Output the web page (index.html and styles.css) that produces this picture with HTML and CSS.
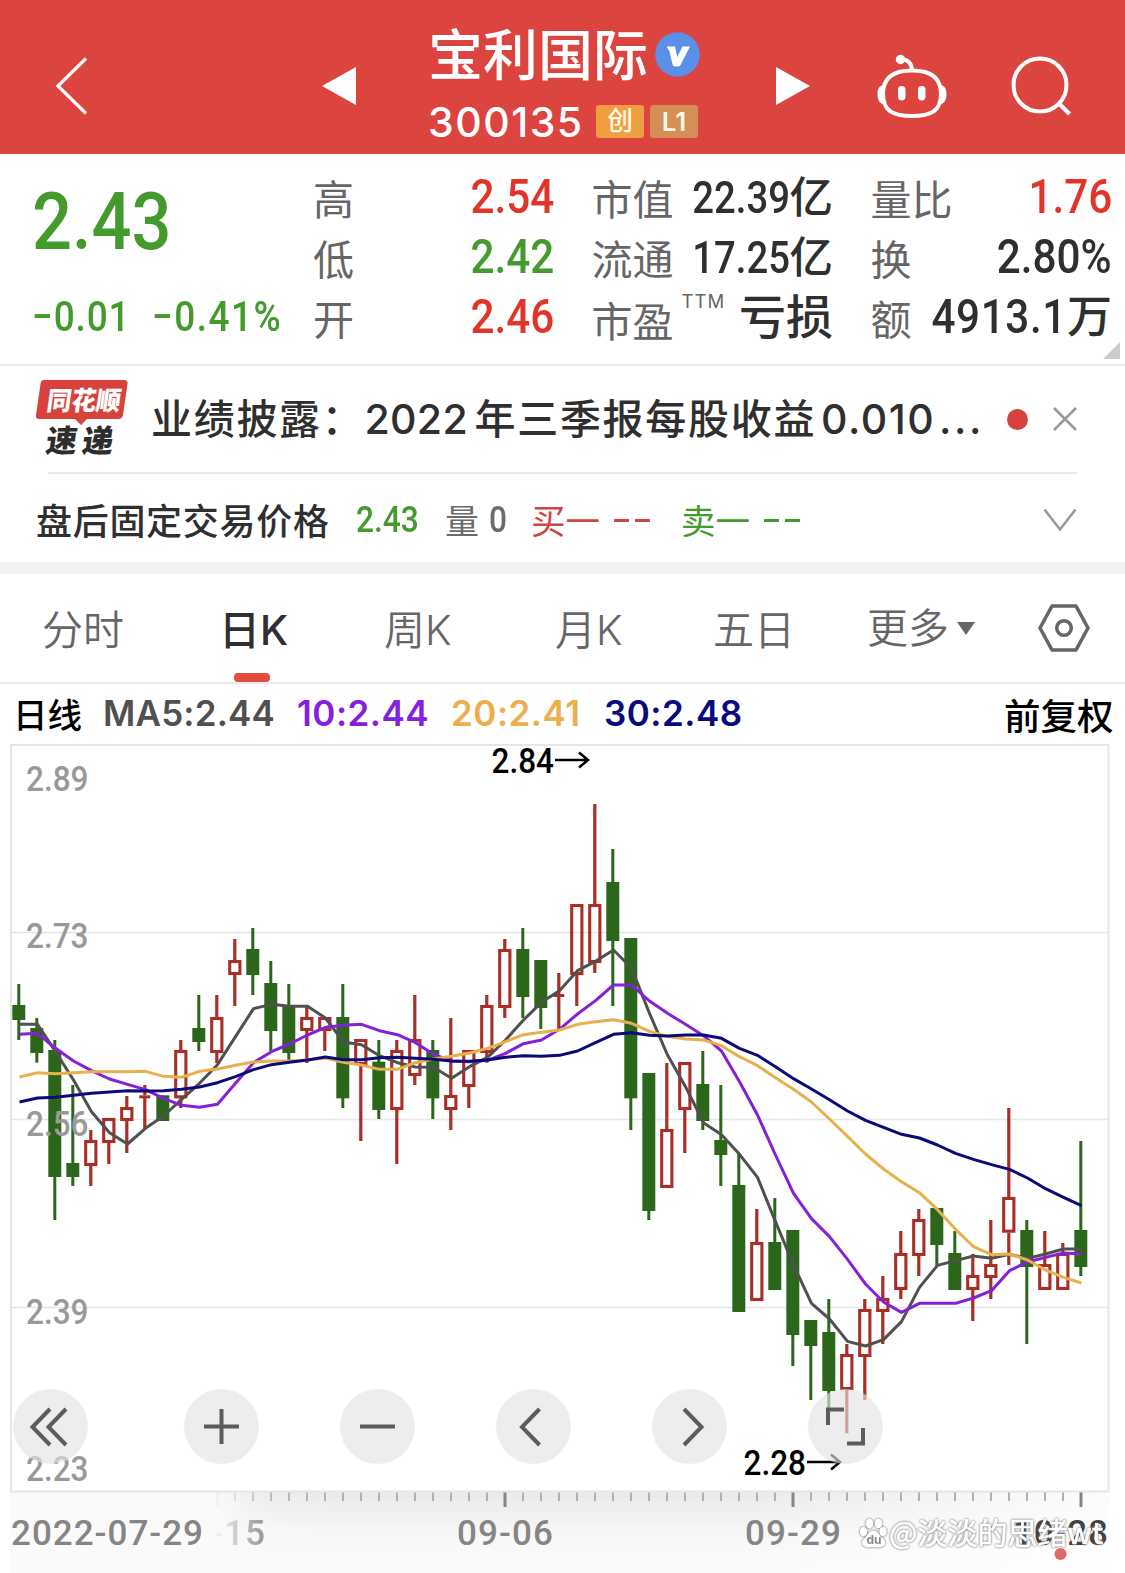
FILE: index.html
```html
<!DOCTYPE html>
<html lang="zh-CN">
<head>
<meta charset="utf-8">
<title>宝利国际 300135</title>
<link rel="stylesheet" href="styles.css">
</head>
<body>
<header class="header">
  <svg class="icon back" width="40" height="64" viewBox="0 0 40 64"><path d="M34 4.500 6 32 34 59.500" fill="none" stroke="#fff" stroke-width="3.200"/></svg>
  <svg class="icon prev" width="36" height="40" viewBox="0 0 36 40"><path d="M35 1V39L1 20Z" fill="#fff"/></svg>
  <div class="stock">
    <div class="stock-name"><h1>宝利国际</h1>
      <svg width="45" height="45" viewBox="0 0 45 45"><circle cx="22.500" cy="22.500" r="22.300" fill="#5a90e8"/><path d="M11.500 14.500h8.500l2.300 10.500 5.200-10.500h7.500L25.500 33q-1 1.500-2.700 1.500h-3Q18 34.500 17.500 32.500L14.500 19.500Z" fill="#fff"/></svg>
    </div>
    <div class="stock-code"><span class="code">300135</span><span class="tag tag-gem">创</span><span class="tag tag-l1">L1</span></div>
  </div>
  <svg class="icon next" width="36" height="40" viewBox="0 0 36 40"><path d="M1 1V39L35 20Z" fill="#fff"/></svg>
  <svg class="icon robot" width="70" height="66" viewBox="0 0 70 66"><g fill="none" stroke="#fff" stroke-width="4"><path d="M35 17.500C54 17.500 64 25 64 41 64 58 54 63 35 63S6 58 6 41C6 25 16 17.500 35 17.500Z"/><path d="M35 18C35 10 31 6.500 24 6"/></g><g fill="#fff"><circle cx="23.500" cy="6.500" r="4.700"/><path d="M6 32C2 33 .5 36 .5 41s1.500 9 5.500 10ZM64 32c4 1 5.500 4 5.500 9s-1.500 9-5.500 10Z"/><rect x="21" y="33" width="7.500" height="14.500" rx="3.700"/><rect x="41" y="33" width="7.500" height="14.500" rx="3.700"/></g></svg>
  <svg class="icon search" width="62" height="64" viewBox="0 0 62 64"><g fill="none" stroke="#fff" stroke-width="4"><circle cx="29" cy="31" r="26.500"/><path d="M48 49.500 58.500 60"/></g></svg>
</header>

<section class="quote">
  <div class="price-block">
    <div class="price din">2.43</div>
    <div class="change"><span class="din">−0.01</span><span class="din pct">−0.41%</span></div>
  </div>
  <dl class="stats">
    <div><dt>高</dt><dd class="red"><span class="din">2.54</span></dd></div>
    <div><dt>市值</dt><dd class="sm"><span class="din">22.39</span>亿</dd></div>
    <div><dt>量比</dt><dd class="red"><span class="din">1.76</span></dd></div>
    <div><dt>低</dt><dd class="green"><span class="din">2.42</span></dd></div>
    <div><dt>流通</dt><dd class="sm"><span class="din">17.25</span>亿</dd></div>
    <div><dt>换</dt><dd><span class="din">2.80%</span></dd></div>
    <div><dt>开</dt><dd class="red"><span class="din">2.46</span></dd></div>
    <div><dt class="pe">市盈<sup>TTM</sup></dt><dd class="loss">亏损</dd></div>
    <div><dt>额</dt><dd><span class="din amount">4913.1</span><span class="wan">万</span></dd></div>
  </dl>
  <i class="corner"></i>
</section>

<section class="news">
  <svg class="news-logo" width="92" height="78" viewBox="0 0 92 78"><path d="M8 0H88Q92 0 91.500 4L87 35Q86.500 39 82 39H51L45 45 39 39H3Q-.500 39 0 35L4.500 4Q5 0 8 0Z" fill="#d8423d"/><g transform="skewX(-8)" class="logo-text"><text x="14" y="30" textLength="74" lengthAdjust="spacingAndGlyphs" fill="#fff">同花顺</text><g class="sudi" fill="#2d2d2d"><text x="19" y="72">速</text><text x="55" y="72">递</text></g></g></svg>
  <p class="news-title"><span>业绩披露：</span><span class="num year">2022</span><span>年三季报每股收益</span><span class="num eps">0.010</span><span class="dots">...</span></p>
  <i class="dot"></i>
  <svg class="close" width="24" height="24" viewBox="0 0 24 24"><path d="M1 1 23 23M23 1 1 23" stroke="#999" stroke-width="2.500"/></svg>
</section>

<section class="after">
  <span class="after-label">盘后固定交易价格</span>
  <span class="din green after-price">2.43</span>
  <span class="gray vol">量</span><span class="din gray vol0">0</span>
  <span class="bid">买一</span><i class="dash bid"></i>
  <span class="ask">卖一</span><i class="dash ask"></i>
  <svg class="expand" width="34" height="24" viewBox="0 0 34 24"><path d="M1.500 1.500 17 21.500 32.500 1.500" fill="none" stroke="#999" stroke-width="2.500"/></svg>
</section>

<nav class="tabs">
  <a class="tab t1">分时</a><a class="tab t2 active">日K</a><a class="tab t3">周K</a><a class="tab t4">月K</a><a class="tab t5">五日</a><a class="tab t6">更多<i class="caret"></i></a>
  <svg class="setting" width="52" height="48" viewBox="0 0 52 48"><g fill="none" stroke="#666" stroke-width="3.600"><path d="M14 2H38L50 24 38 46H14L2 24Z" stroke-linejoin="round"/><circle cx="26" cy="24" r="7.300"/></g></svg>
</nav>

<section class="legend">
  <b class="period">日线</b><span class="ma5">MA5:2.44</span><span class="ma10">10:2.44</span><span class="ma20">20:2.41</span><span class="ma30">30:2.48</span><b class="adjust">前复权</b>
</section>

<section class="chart">
  <svg id="kline" width="1125" height="829" viewBox="0 744 1125 829">
    <defs>
      <linearGradient id="axisShade" x1="0" y1="0" x2="0" y2="1"><stop offset="0" stop-color="#e9e9e9"/><stop offset=".5" stop-color="#f7f7f7"/><stop offset="1" stop-color="#fbfbfb"/></linearGradient>
      <linearGradient id="fadeLeft"><stop offset="0" stop-color="#fafafa"/><stop offset=".615" stop-color="#fafafa"/><stop offset=".76" stop-color="#fafafa" stop-opacity=".2"/><stop offset="1" stop-color="#fafafa" stop-opacity="0"/></linearGradient>
      <linearGradient id="fadeRight"><stop offset="0" stop-color="#fff" stop-opacity="0"/><stop offset="1" stop-color="#fff" stop-opacity=".9"/></linearGradient>
    </defs>
    <rect x="10" y="1491" width="1100" height="82" fill="url(#axisShade)"/>
    <rect x="750" y="1491" width="375" height="82" fill="url(#fadeRight)"/>
    <g id="ticks"></g>
    <text class="date" x="169" y="1545" textLength="96">08-15</text>
    <rect x="10" y="1492" width="330" height="81" fill="url(#fadeLeft)"/>
    <g stroke="#e6e6e6" stroke-width="2" fill="none"><path d="M11 745H1108.500V1491.500H11Z"/><path stroke-width="1.500" d="M11 932.500H1108M11 1119.500H1108M11 1307.500H1108"/></g>
    <g id="candles"></g>
    <g class="ylabel"><text x="26" y="791">2.89</text><text x="26" y="948.500">2.73</text><text x="26" y="1136">2.56</text><text x="26" y="1324">2.39</text><text x="26" y="1481">2.23</text></g>
    <g id="averages"></g>
    <g class="mark"><text x="491.500" y="773">2.84</text><text x="743.500" y="1475">2.28</text><path d="M555 760H587M579 752.500 588 760 579 767.500M807 1462H839M831 1454.500 840 1462 831 1469.500"/></g>
    <text class="date" x="11" y="1545" textLength="192">2022-07-29</text>
    <text class="date" x="457" y="1545" textLength="96">09-06</text>
    <text class="date" x="745" y="1545" textLength="96">09-29</text>
    <text class="date dark" x="1013" y="1545" textLength="95">10-28</text>
    <circle cx="1060.500" cy="1554" r="6" fill="#dd6a66"/>
    <g class="watermark">
      <g><ellipse cx="863.500" cy="1531.500" rx="3.700" ry="4.500"/><ellipse cx="869.500" cy="1523.500" rx="3.800" ry="4.800"/><ellipse cx="878.500" cy="1523.500" rx="3.800" ry="4.800"/><ellipse cx="883" cy="1531.500" rx="3.700" ry="4.500"/><path d="M873.500 1530.500C868 1530.500 868 1536 864 1538.500 859 1544 864 1549 873.500 1547 883 1549 888.500 1544 883 1538.500 879 1536 879 1530.500 873.500 1530.500Z"/></g>
      <text class="du" x="866.500" y="1544">du</text>
      <text class="handle" x="889" y="1544" textLength="214" lengthAdjust="spacingAndGlyphs">@淡淡的思绪wt</text>
    </g>
  </svg>
  <div class="toolbar">
    <button><svg width="75" height="75" viewBox="0 0 75 75"><path d="M37 20 19.500 38 37 56M53 20 35.500 38 53 56"/></svg></button>
    <button><svg width="75" height="75" viewBox="0 0 75 75"><path d="M20 37.500H55M37.500 20V55"/></svg></button>
    <button><svg width="75" height="75" viewBox="0 0 75 75"><path d="M20 37.500H55"/></svg></button>
    <button><svg width="75" height="75" viewBox="0 0 75 75"><path d="M43.500 20 26 38 43.500 56"/></svg></button>
    <button><svg width="75" height="75" viewBox="0 0 75 75"><path d="M32 20 49.500 38 32 56"/></svg></button>
    <button><svg width="75" height="75" viewBox="0 0 75 75"><path d="M20 36V20.500H36M39 54.500H55V39"/></svg></button>
  </div>
</section>
<script src="chart.js"></script>
</body>
</html>
```
FILE: styles.css
```css
* { box-sizing: border-box; }
body { margin: 0; width: 1125px; height: 1573px; overflow: hidden; background: #fff; color: #2f2f2f; font-family: Inter, "Noto Sans CJK SC", sans-serif; }
h1, p, dl, dd { margin: 0; }
svg { display: block; flex: none; }
.din { display: inline-block; font-family: Roboto, sans-serif; font-weight: 500; transform: scaleX(.88); transform-origin: right center; white-space: nowrap; }
.red { color: #e2352a; }
.green { color: #449a2c; }
.gray { color: #6b6b6b; }

.header { display: flex; align-items: center; height: 154px; padding-top: 18px; background: #dc4440; color: #fff; }
.back { margin-left: 52px; }
.prev { margin-left: 229px; }
.stock { width: 272px; margin: 0 0 0 71px; }
.stock-name { display: flex; align-items: center; height: 68px; }
.stock-name h1 { width: 223px; font-size: 55px; line-height: 68px; font-weight: 500; white-space: nowrap; margin-top: 2px; }
.stock-name svg { margin-left: 4px; margin-top: 2px; }
.stock-code { display: flex; align-items: center; height: 62px; margin-top: 3px; }
.code { width: 168px; flex: none; font-size: 41px; font-weight: 500; letter-spacing: 1.500px; }
.tag { width: 48px; height: 33px; margin-right: 6px; border-radius: 3px; font-size: 26px; line-height: 31px; font-weight: 500; text-align: center; color: #fffbe8; flex: none; }
.tag-gem { background: #f09f40; }
.tag-l1 { background: #d58e55; line-height: 34px; font-weight: 600; }
.next { margin-left: 75px; }
.robot { margin-left: 66px; }
.search { margin-left: 64px; }

.quote { position: relative; display: flex; height: 212px; padding: 14px 11px 0 32px; border-bottom: 2px solid #ebebeb; }
.price-block { width: 281px; color: #449a2c; }
.price-block .din { transform-origin: left center; }
.price { font-size: 80px; line-height: 96px; margin-top: 6px; }
.change { margin-top: 17px; font-size: 42px; line-height: 60px; white-space: nowrap; display: flex; }
.change .din { width: 120px; letter-spacing: 1px; }
.change .pct { letter-spacing: 1.700px; }
.stats { flex: 1; display: grid; grid-template-columns: 241px 241.500px 241.500px; grid-auto-rows: 60px; column-gap: 37.500px; }
.stats > div { display: flex; justify-content: space-between; line-height: 60px; white-space: nowrap; }
dt { font-size: 41px; color: #666; padding-top: 2px; }
.pe { position: relative; padding-top: 4px; }
.pe sup { position: absolute; left: 90px; top: -7px; font-size: 18.500px; line-height: 40px; letter-spacing: 1px; }
dd { font-size: 48px; line-height: 56px; font-weight: 500; }
dd.sm { font-size: 43.500px; line-height: 59px; }
dd.loss { font-size: 47px; font-weight: 500; line-height: 58px; }
.amount { letter-spacing: .7px; }
.wan { font-size: 45px; }
.corner { position: absolute; right: 5px; bottom: 5px; border: solid transparent; border-width: 0 0 17px 17px; border-bottom-color: #ccc; }

.news { display: flex; align-items: center; height: 108px; margin: 0 48px; border-bottom: 2px solid #ebebeb; }
.news-logo { margin-left: -12px; margin-top: 0; overflow: visible; }
.logo-text { font: 900 26px "Noto Sans CJK SC", sans-serif; }
.sudi { font-size: 31px; }
.news-title { display: flex; margin: -1px 0 0 23px; width: 854px; font-size: 41px; font-weight: 500; line-height: 60px; letter-spacing: 1.7px; white-space: nowrap; }
.num { letter-spacing: .3px; }
.year { width: 110px; }
.eps { width: 121px; padding-left: 5px; letter-spacing: 1.500px; }
.dots { letter-spacing: 2.500px; padding-left: 2px; }
.dot { width: 21px; height: 21px; border-radius: 50%; background: #d8423d; margin-left: 4px; flex: none; }
.close { margin-left: 25px; }

.after { display: flex; align-items: center; height: 88px; padding: 4px 0 0 36px; font-size: 34px; }
.after .din { transform-origin: left center; }
.after-label { width: 320px; font-size: 36px; font-weight: 500; letter-spacing: .7px; margin-top: -2px; }
.after-price { width: 89px; font-size: 36px; }
.vol { width: 44px; margin-top: -2px; }
.vol0 { width: 42px; font-size: 36px; }
.bid { color: #cb4741; }
.ask { color: #449a2c; }
span.bid, span.ask { width: 83px; font-size: 34.500px; margin-top: -2px; }
.dash { width: 36px; height: 3px; margin-right: 31px; background: linear-gradient(90deg, currentColor 15px, transparent 15px 21px, currentColor 21px); }
.expand { margin-left: 212px; }

.tabs { display: flex; align-items: center; height: 122px; border-top: 12px solid #f3f3f3; border-bottom: 2px solid #ebebeb; color: #666; }
.tab { position: relative; font-size: 41px; font-weight: 350; height: 108px; line-height: 113px; white-space: nowrap; flex: none; }
.t1 { width: 177px; margin-left: 42px; }
.t2 { width: 165px; }
.t3 { width: 171px; }
.t4 { width: 158px; }
.t5 { width: 154px; }
.t6 { display: flex; align-items: center; width: 171px; }
.active { color: #2f2f2f; font-weight: 500; }
.active::after { content: ""; position: absolute; left: 15px; bottom: 0; width: 36px; height: 9px; border-radius: 4px; background: #e24d40; }
.caret { margin-left: 8px; border: solid transparent; border-width: 13px 9px 0; border-top-color: #666; }

.legend { display: flex; align-items: center; height: 60px; font-size: 35px; white-space: nowrap; color: #000; letter-spacing: .5px; }
.legend span { font-weight: 600; margin-top: -2px; }
.legend b { font-weight: 500; letter-spacing: 0; }
.period { margin: -2px 0 0 13px; width: 90px; font-size: 34.500px; }
.ma5 { color: #505050; width: 194px; letter-spacing: .2px; }
.ma10 { color: #8420e0; width: 154px; }
.ma20 { color: #ebb04d; width: 153px; }
.ma30 { color: #0a0a80; width: 400px; }
.adjust { font-size: 36.500px; }

.chart { position: relative; height: 829px; }
.ylabel { font: 500 35px Roboto, sans-serif; fill: #999; }
.mark { font: 500 35px Roboto, sans-serif; }
.mark path { fill: none; stroke: #000; stroke-width: 2.500px; }
.ylabel text, .mark text { transform-box: fill-box; transform: scaleX(.9); }
.date { font: 500 35px Roboto, sans-serif; fill: #858585; }
.dark { fill: #444; }
.watermark { fill: #fff; filter: drop-shadow(0 0 1.200px #555); }
.handle { font: 30px "Noto Sans CJK SC", sans-serif; stroke: #fff; stroke-width: .6px; }
.du { font: 700 12px Inter, sans-serif; fill: #888; }
.toolbar { position: absolute; left: 13px; top: 645px; display: flex; gap: 81px; }
.toolbar button { width: 75px; height: 75px; padding: 0; border: 0; border-radius: 50%; background: rgba(227, 227, 227, .635); }
.toolbar button:first-child { margin-right: 15px; }
.toolbar path { fill: none; stroke: #5c5c5c; stroke-width: 4px; }
```
FILE: chart.js
```js
// Candles: direction, then high, body top, body bottom and low in thirds of a pixel.
// Each group is measured from its own base line.
const GROUPS = [
  [740, [
    'g 732 795 840 900', 'g 834 864 939 968', 'g 900 930 1311 1440', 'g 1035 1269 1311 1338', 'r 1170 1200 1278 1338',
    'r 1134 1134 1209 1272', 'r 1068 1101 1143 1239', 'r 1035 1066 1074 1166', 'g 1066 1066 1143 1143', 'r 900 930 1075 1104',
    'g 765 864 906 933', 'r 765 831 939 969', 'r 597 660 705 798', 'g 564 627 705 765', 'g 663 729 873 935',
    'g 732 798 939 963', 'r 798 831 873 969', 'r 831 831 873 933', 'g 732 831 1075 1104', 'r 897 897 975 1203',
    'g 900 965 1110 1137', 'r 900 930 1110 1272', 'r 765 897 1008 1035', 'g 900 930 1075 1137', 'r 834 1065 1110 1170',
    'r 930 930 1041 1104', 'r 765 795 939 968', 'r 597 627 804 834', 'g 564 627 771 834', 'g 660 660 804 867',
    'r 699 762 771 867', 'r 492 492 705 798', 'r 192 492 669 699', 'g 327 426 603 798', 'g 594 594 1075 1170',
    'g 999 999 1413 1440', 'r 969 1167 1344 1344', 'r 966 966 1110 1239', 'g 933 1032 1143 1170', 'g 1035 1200 1245 1338']],
  [1000, [
    'g 460 555 936 936', 'r 627 726 903 903', 'g 594 726 870 870', 'g 690 690 1005 1098', 'g 960 960 1038 1200',
    'g 897 996 1173 1232', 'r 1032 1062 1170 1300', 'r 897 927 1071 1200', 'r 828 894 936 1032', 'r 693 759 870 897',
    'r 627 657 768 828', 'g 624 624 735 800', 'g 693 759 870 870', 'r 762 825 870 963', 'r 660 792 834 897',
    'r 324 591 698 795', 'g 660 690 801 1032', 'r 693 792 870 870', 'r 729 759 870 870', 'g 423 690 801 828']]
];

// Moving averages: the first 40 days use the upper base line, the other 20 the lower one.
const AVERAGES = {
  '#505050': [853,853,935,1020,1115,1178,1212,1165,1128,1078,1030,974,890,806,793,799,799,834,906,914,947,968,981,982,1015,980,952,900,840,787,752,692,664,630,684,820,945,1040,1148,1184,463,532,665,795,910,957,1024,1038,1019,965,862,796,782,768,775,763,775,762,747,747],
  '#8420d8': [883,880,925,963,992,1017,1033,1049,1075,1096,1102,1093,1030,968,935,912,885,862,856,853,872,884,908,943,963,965,961,940,911,900,868,822,782,735,735,783,820,853,887,933,245,345,465,580,656,710,778,852,906,937,910,910,910,894,872,812,786,772,759,761],
  '#e8b04d': [1011,998,1001,998,995,995,995,994,1009,1012,994,987,976,966,963,963,960,954,967,975,988,988,968,957,949,939,925,905,884,877,870,853,845,839,850,874,889,897,900,917,170,197,233,268,306,357,409,462,507,545,578,629,688,740,764,762,780,810,832,849],
  '#0a0a78': [1086,1074,1072,1066,1060,1056,1052,1053,1052,1048,1041,1028,1010,989,974,967,960,951,959,959,953,952,955,958,963,964,960,952,947,949,946,933,908,883,878,886,888,885,885,895,145,166,200,236,267,299,333,361,382,403,414,435,460,478,494,508,534,566,592,617]
};

const xOf = i => 19 + 18 * i;
let candles = '';
let day = 0;
for (const [base, rows] of GROUPS) {
  for (const row of rows) {
    const [dir, ...v] = row.split(' ');
    const [high, top, bottom, low] = v.map(n => base + n / 3);
    const x = xOf(day++) - .2;
    if (dir === 'g') {
      candles += `<path d="M${x} ${high}V${low}" stroke="#2c661b" stroke-width="3"/><rect x="${x - 6.5}" y="${top}" width="13" height="${bottom - top}" fill="#2c661b"/>`;
    } else {
      candles += `<path d="M${x} ${high}V${top}M${x} ${bottom}V${low}" stroke="#a82f25" stroke-width="3.200"/>`;
      candles += bottom - top < 5
        ? `<rect x="${x - 5.5}" y="${top}" width="11" height="3" fill="#a82f25"/>`
        : `<rect x="${x - 5.1}" y="${top + 1.5}" width="10.200" height="${bottom - top - 3}" fill="none" stroke="#a82f25" stroke-width="3.100"/>`;
    }
  }
}
document.getElementById('candles').innerHTML = candles;

document.getElementById('averages').innerHTML = Object.entries(AVERAGES).map(([color, values]) => {
  const points = values.map((v, i) => `${xOf(i) + .5},${(i < 40 ? 740 : 1000) + v / 3}`).join(' ');
  return `<polyline points="${points}" fill="none" stroke="${color}" stroke-width="3" stroke-linejoin="round"/>`;
}).join('');

let ticks = '';
for (let i = 11; i < 60; i++) {
  const major = (i - 11) % 16 === 0;
  ticks += `<path d="M${xOf(i)} 1491V${major ? 1507 : 1501}" stroke="${major ? '#858585' : '#b0b0b0'}" stroke-width="${major ? 3 : 2}"/>`;
}
document.getElementById('ticks').innerHTML = ticks;
```
